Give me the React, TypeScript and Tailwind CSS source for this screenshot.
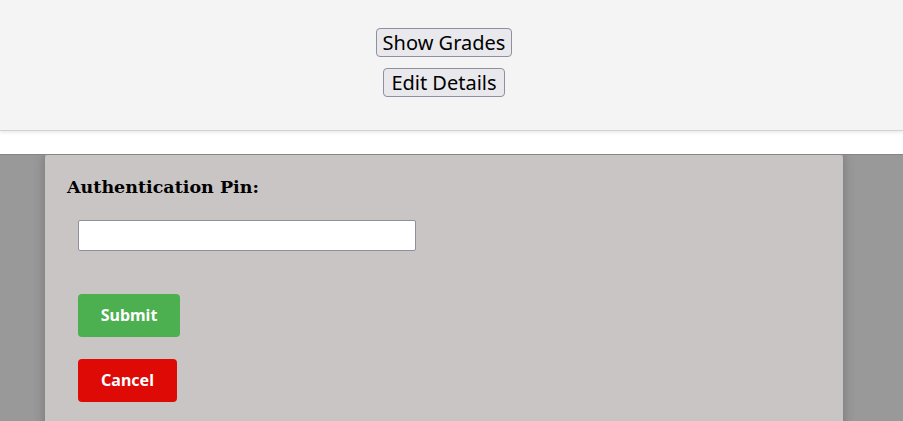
export default function App() {
  return (
    <div className="w-[903px] h-[421px] overflow-hidden bg-white" style={{ fontFamily: "'Noto Sans', sans-serif" }}>
      <div className="h-[131px] bg-[#f4f4f4] border-b border-[#d2d2d2] shadow-[0_2px_3px_rgba(0,0,0,0.08)] flex flex-col items-center pt-[28px] gap-[11px] pr-[15px]">
        <button className="w-[136px] h-[29px] bg-[#e9e9ed] border border-[#8f8f9d] rounded-[4px] text-[20px] leading-none text-black">
          Show Grades
        </button>
        <button className="w-[122px] h-[29px] bg-[#e9e9ed] border border-[#8f8f9d] rounded-[4px] text-[20px] leading-none text-black">
          Edit Details
        </button>
      </div>
      <div className="h-[23px]" />
      <div className="h-[267px] bg-[#999999] border-t border-[#858585] pl-[45px] overflow-hidden">
        <div className="w-[798px] h-[280px] -mt-px bg-[#c9c5c4] rounded-t-[4px] shadow-[0_0_12px_rgba(0,0,0,0.25)] pl-[22px] pt-[25px]">
          <div className="text-[17.5px] font-bold text-black leading-none" style={{ fontFamily: "'DejaVu Serif', serif" }}>
            Authentication Pin:
          </div>
          <div className="pl-[11px] pt-[23px]">
            <input className="block w-[338px] h-[31px] bg-white border border-[#8f8f9d] rounded-[2px]" />
            <button className="mt-[43px] block w-[102px] h-[43px] bg-[#4caf50] rounded-[4px] text-white font-bold text-[16px]">
              Submit
            </button>
            <button className="mt-[22px] block w-[99px] h-[43px] bg-[#dd0a06] rounded-[4px] text-white font-bold text-[16px]">
              Cancel
            </button>
          </div>
        </div>
      </div>
    </div>
  );
}
